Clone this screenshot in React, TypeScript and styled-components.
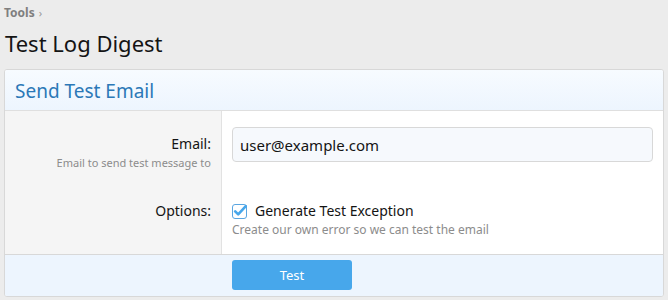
import styled, { createGlobalStyle } from "styled-components";

const GlobalStyle = createGlobalStyle`
    html, body {
        margin: 0;
        padding: 0;
        background: #ececec;
        font-family: "Noto Sans", "Open Sans", "Liberation Sans", sans-serif;
        color: #141414;
    }
`;

const Page = styled.div`
    padding: 3px 4px 0 4px;
`;

const Breadcrumb = styled.div`
    display: flex;
    align-items: center;
    gap: 4px;
    font-size: 12px;
    font-weight: 700;
    color: #7f7f7f;
    height: 18px;
`;

const Chevron = styled.span`
    font-weight: 400;
    font-size: 11px;
    color: #999;
`;

const Title = styled.h1`
    margin: 8px 0 12px 1px;
    font-size: 22px;
    font-weight: 400;
    color: #141414;
    line-height: 28px;
`;

const Block = styled.div`
    border: 1px solid #d8d8d8;
    border-radius: 3px;
    background: #fff;
    overflow: hidden;
`;

const BlockHeader = styled.h2`
    margin: 0;
    padding: 8px 10px 6px;
    font-size: 19px;
    font-weight: 400;
    color: #2b78b7;
    background: linear-gradient(to bottom, #f7fbff, #edf5fe);
    border-bottom: 1px solid #dfdfdf;
    line-height: 26px;
`;

const Row = styled.div`
    display: grid;
    grid-template-columns: 217px 1fr;
`;

const Label = styled.div<{ $pad: number }>`
    background: #f5f5f5;
    border-right: 1px solid #e2e2e2;
    text-align: right;
    padding: ${(p) => p.$pad}px 10px 0 0;
    font-size: 14px;
    line-height: 20px;
`;

const Hint = styled.div<{ $size: number }>`
    font-size: ${(p) => p.$size}px;
    color: #8c8c8c;
    line-height: 17px;
`;

const Field = styled.div<{ $pad: number }>`
    padding: ${(p) => p.$pad}px 10px 0 10px;
`;

const Input = styled.div`
    height: 33px;
    border: 1px solid #d8d8d8;
    border-radius: 4px;
    background: #f6f9fd;
    display: flex;
    align-items: center;
    padding: 0 7px;
    font-size: 15px;
`;

const CheckRow = styled.label`
    display: flex;
    align-items: center;
    gap: 8px;
    font-size: 14px;
    line-height: 20px;
`;

const Footer = styled.div`
    border-top: 1px solid #d8d8d8;
    background: #edf5fe;
    padding: 5px 0 6px 227px;
`;

const Button = styled.button`
    width: 120px;
    height: 30px;
    border: none;
    border-radius: 3px;
    background: #47a7eb;
    color: #fff;
    font-family: inherit;
    font-size: 13px;
`;

function CheckIcon() {
    return (
        <svg width="15" height="15" viewBox="0 0 15 15">
            <rect x="0.5" y="0.5" width="14" height="14" rx="2.5" fill="#fff" stroke="#5aa6e1" />
            <path d="M3.2 7.4 L6.2 10.4 L13.8 2.2" fill="none" stroke="#47a7eb" strokeWidth="2.6" strokeLinecap="round" strokeLinejoin="round" />
        </svg>
    );
}

export default function App() {
    return (
        <Page>
            <GlobalStyle />
            <Breadcrumb>
                Tools <Chevron>›</Chevron>
            </Breadcrumb>
            <Title>Test Log Digest</Title>
            <Block>
                <BlockHeader>Send Test Email</BlockHeader>
                <Row>
                    <Label $pad={23}>
                        Email:
                        <Hint $size={11}>Email to send test message to</Hint>
                        <div style={{ height: 20 }} />
                    </Label>
                    <Field $pad={16}>
                        <Input>user@example.com</Input>
                    </Field>
                </Row>
                <Row>
                    <Label $pad={10}>
                        Options:
                        <div style={{ height: 33 }} />
                    </Label>
                    <Field $pad={10}>
                        <CheckRow>
                            <CheckIcon />
                            Generate Test Exception
                        </CheckRow>
                        <Hint $size={12}>Create our own error so we can test the email</Hint>
                    </Field>
                </Row>
                <Footer>
                    <Button>Test</Button>
                </Footer>
            </Block>
        </Page>
    );
}
